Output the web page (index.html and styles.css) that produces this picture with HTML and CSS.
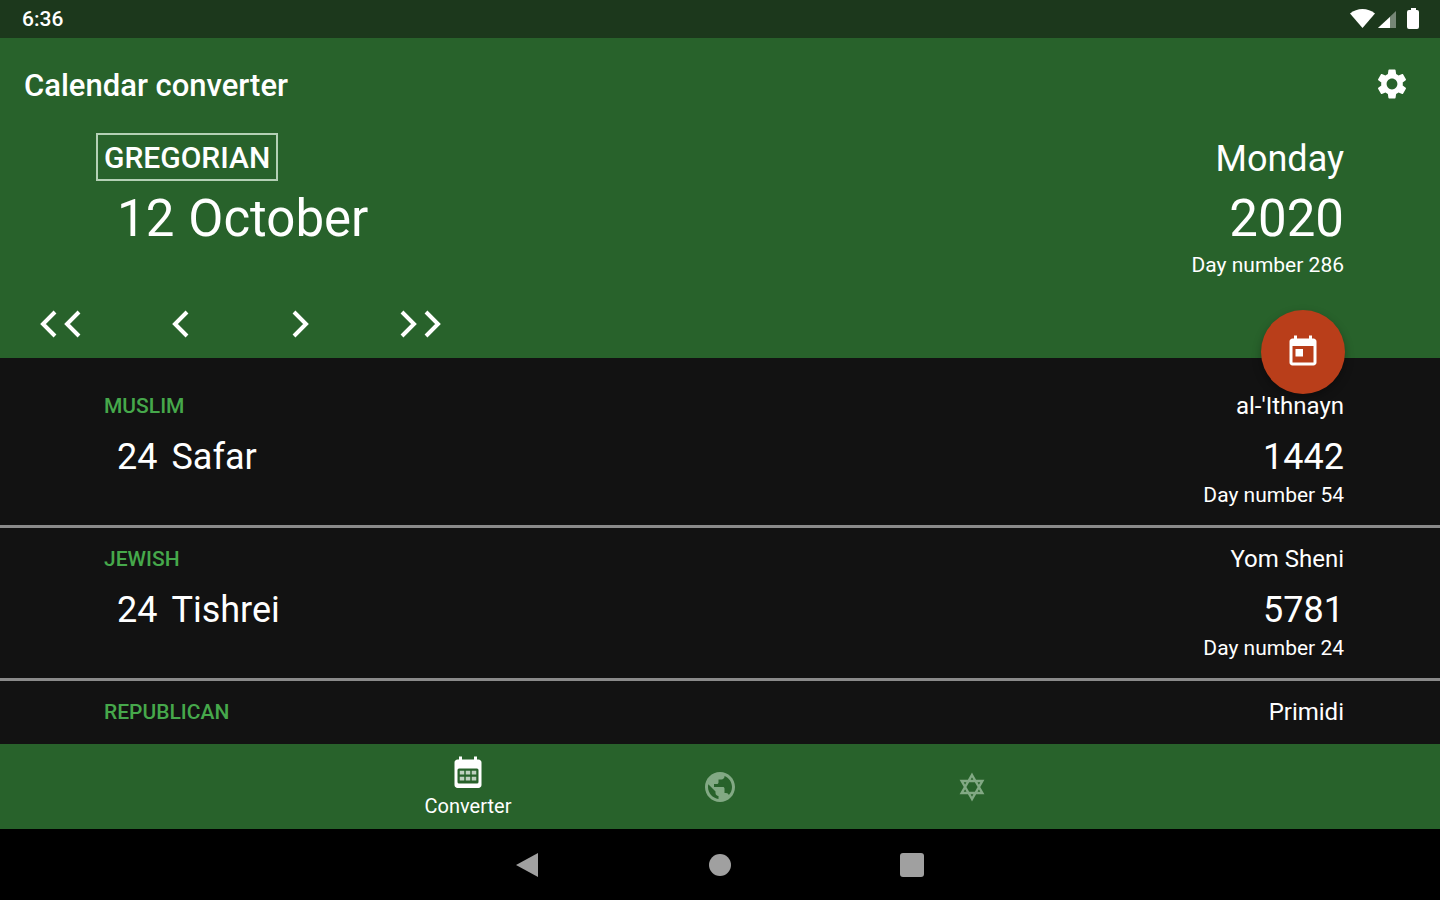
FILE: index.html
```
<!DOCTYPE html>
<html lang="en">

<head>
    <meta charset="UTF-8">
    <title>Calendar converter</title>
    <meta name="viewport" content="width=device-width, initial-scale=1.0">
    <link rel="stylesheet" href="styles.css">
</head>

<body>
    <div class="status-bar">
        <span class="clock">6:36</span>
        <svg class="status-icons" viewBox="0 0 70 22" fill="#fff">
            <path d="M0 5.500C7-.5 18-.5 25 5.500L12.500 20z" />
            <path d="M46 3v17H28z" opacity=".4" />
            <path d="M40 9v11H28z" />
            <path d="M59 2h2V0h5v2h1q2 0 2 2v15q0 2-2 2h-8q-2 0-2-2V4q0-2 2-2z" />
        </svg>
    </div>

    <header class="header">
        <div class="app-bar">
            <h1>Calendar converter</h1>
            <button class="settings" aria-label="Settings">
                <svg class="icon" viewBox="0 0 24 24"><path d="M19.140 12.940c.04-.3.06-.61.06-.94 0-.32-.02-.64-.07-.94l2.030-1.580c.18-.14.23-.41.12-.61l-1.920-3.320c-.12-.22-.37-.29-.59-.22l-2.390.96c-.5-.38-1.030-.7-1.620-.94l-.36-2.540c-.04-.24-.24-.41-.48-.41h-3.840c-.24 0-.43.17-.47.41l-.36 2.540c-.59.24-1.130.57-1.620.94l-2.390-.96c-.22-.08-.47 0-.59.22L2.740 8.870c-.12.21-.08.47.12.61l2.030 1.580c-.05.3-.09.63-.09.94s.02.64.07.94l-2.030 1.580c-.18.14-.23.41-.12.61l1.920 3.320c.12.22.37.29.59.22l2.390-.96c.5.38 1.030.7 1.620.94l.36 2.540c.05.24.24.41.48.41h3.840c.24 0 .44-.17.47-.41l.36-2.540c.59-.24 1.130-.56 1.620-.94l2.390.96c.22.08.47 0 .59-.22l1.920-3.320c.12-.22.07-.47-.12-.61l-2.010-1.580zM12 15.600c-1.980 0-3.600-1.620-3.600-3.600s1.620-3.600 3.600-3.600 3.600 1.620 3.600 3.600-1.620 3.600-3.600 3.600z" /></svg>
            </button>
        </div>

        <div class="current">
            <div class="row">
                <button class="calendar-type">GREGORIAN</button>
                <span class="weekday">Monday</span>
            </div>
            <div class="row main">
                <span class="date"><span>12</span><span>October</span></span>
                <span>2020</span>
            </div>
            <div class="row day-number">Day number 286</div>
        </div>

        <div class="steps">
            <button aria-label="Back a lot"><svg width="42" height="28" viewBox="0 0 42 28"><path d="M16 2L4 14l12 12M40 2L28 14l12 12" /></svg></button>
            <button aria-label="Previous day"><svg width="18" height="28" viewBox="0 0 18 28"><path d="M16 2L4 14l12 12" /></svg></button>
            <button aria-label="Next day"><svg width="18" height="28" viewBox="0 0 18 28"><path d="M3 2l12 12L3 26" /></svg></button>
            <button aria-label="Forward a lot"><svg width="42" height="28" viewBox="0 0 42 28"><path d="M3 2l12 12L3 26M27 2l12 12-12 12" /></svg></button>
        </div>

        <button class="today" aria-label="Today">
            <svg class="icon" viewBox="0 0 24 24"><path d="M19 3h-1V1h-2v2H8V1H6v2H5c-1.110 0-1.990.9-1.990 2L3 19c0 1.100.89 2 2 2h14c1.100 0 2-.9 2-2V5c0-1.100-.9-2-2-2zm0 16H5V8h14v11zM7 10h5v5H7z" /></svg>
        </button>
    </header>

    <main class="list">
        <section class="item">
            <div class="row name"><h2>MUSLIM</h2><span>al-'Ithnayn</span></div>
            <div class="row main">
                <span class="date"><span>24</span><span>Safar</span></span>
                <span>1442</span>
            </div>
            <div class="row day-number">Day number 54</div>
        </section>
        <section class="item">
            <div class="row name"><h2>JEWISH</h2><span>Yom Sheni</span></div>
            <div class="row main">
                <span class="date"><span>24</span><span>Tishrei</span></span>
                <span>5781</span>
            </div>
            <div class="row day-number">Day number 24</div>
        </section>
        <section class="item">
            <div class="row name"><h2>REPUBLICAN</h2><span>Primidi</span></div>
        </section>
    </main>

    <nav class="tabs">
        <a class="active" href="#converter">
            <svg class="icon" viewBox="0 0 24 24">
                <path fill-rule="evenodd" d="M19 3h-1V1h-2v2H8V1H6v2H5c-1.100 0-2 .9-2 2v15c0 1.100.9 2 2 2h14c1.100 0 2-.9 2-2V5c0-1.100-.9-2-2-2zM6 9h12q1 0 1 1v8q0 1-1 1H6q-1 0-1-1v-8q0-1 1-1z" />
                <path opacity=".7" d="M6.500 10.500h3v2.500h-3zM10.500 10.500h3v2.500h-3zM14.500 10.500h3v2.500h-3zM6.500 14.500h3V17h-3zM10.500 14.500h3V17h-3zM14.500 14.500h3V17h-3z" />
            </svg>
            <span>Converter</span>
        </a>
        <a href="#world" aria-label="World">
            <svg class="icon" viewBox="0 0 24 24"><path d="M12 2C6.480 2 2 6.480 2 12s4.480 10 10 10 10-4.480 10-10S17.520 2 12 2zm-1 17.930c-3.950-.49-7-3.850-7-7.930 0-.62.08-1.210.21-1.790L9 15v1c0 1.100.9 2 2 2v1.930zm6.900-2.540c-.26-.81-1-1.390-1.900-1.390h-1v-3c0-.55-.45-1-1-1H8v-2h2c.55 0 1-.45 1-1V7h2c1.100 0 2-.9 2-2v-.41c2.930 1.190 5 4.060 5 7.410 0 2.080-.8 3.970-2.100 5.390z" /></svg>
        </a>
        <a href="#jewish" aria-label="Jewish">
            <svg class="icon star" viewBox="0 0 24 24"><path d="M12 4l6.900 12H5.100zM12 20L5.100 8h13.800z" /></svg>
        </a>
    </nav>

    <div class="system-bar">
        <button aria-label="Back"><svg width="26" height="26" viewBox="0 0 26 26"><path d="M23 1v24L1 13z" /></svg></button>
        <button aria-label="Home"><svg width="26" height="26" viewBox="0 0 26 26"><circle cx="13" cy="13" r="11" /></svg></button>
        <button aria-label="Recent apps"><svg width="26" height="26" viewBox="0 0 26 26"><rect x="1" y="1" width="24" height="24" rx="3" /></svg></button>
    </div>
</body>

</html>
```
FILE: styles.css
```
* {
    box-sizing: border-box;
}

body {
    margin: 0;
    height: 100vh;
    display: flex;
    flex-direction: column;
    background: #121212;
    color: #fff;
    font-family: Roboto, sans-serif;
}

h1,
h2 {
    margin: 0;
    font-weight: 500;
}

button {
    padding: 0;
    border: none;
    background: none;
    color: inherit;
    font-family: inherit;
    cursor: pointer;
}

svg {
    display: block;
}

.icon {
    width: 36px;
    height: 36px;
    fill: currentColor;
}

.status-bar {
    height: 38px;
    flex-shrink: 0;
    padding: 0 20px 0 22px;
    display: flex;
    align-items: center;
    justify-content: space-between;
    background: #1c381c;
}

.clock {
    font-size: 21px;
    font-weight: 500;
}

.status-icons {
    width: 70px;
    height: 22px;
}

.header {
    position: relative;
    flex-shrink: 0;
    background: #28622b;
}

.app-bar {
    height: 95px;
    padding: 0 30px 0 24px;
    display: flex;
    align-items: center;
    justify-content: space-between;
}

.settings {
    padding-bottom: 4px;
}

h1 {
    font-size: 31px;
}

.current {
    padding: 0 96px;
}

.row {
    display: flex;
    align-items: center;
    justify-content: space-between;
}

.calendar-type {
    height: 48px;
    padding: 0 6px;
    border: 2px solid #b4d0b5;
    font-size: 30px;
    font-weight: 500;
}

.weekday {
    padding-top: 4px;
    font-size: 36px;
}

.main {
    height: 48px;
    margin-top: 8px;
    font-size: 36px;
}

.current .main {
    height: 66px;
    margin-top: 4px;
    font-size: 51px;
}

.date {
    display: flex;
    gap: 14px;
    padding-left: 21px;
}

.day-number {
    height: 28px;
    justify-content: flex-end;
    font-size: 21px;
}

.steps {
    height: 68px;
    margin-top: 11px;
    display: flex;
}

.steps button {
    width: 120px;
    display: flex;
    align-items: center;
    justify-content: center;
}

.steps path {
    fill: none;
    stroke: #fff;
    stroke-width: 4;
}

.today {
    position: absolute;
    right: 95px;
    bottom: -36px;
    width: 84px;
    height: 84px;
    border-radius: 50%;
    background: #b93e1a;
    display: flex;
    align-items: center;
    justify-content: center;
    box-shadow: 0 4px 10px rgba(0, 0, 0, 0.3);
}

.list {
    flex: 1;
    min-height: 0;
    padding-top: 17px;
    overflow: hidden;
}

.item {
    padding: 12px 96px 16px;
    border-bottom: 3px solid #8a8a8a;
}

.name {
    height: 38px;
    font-size: 24px;
}

h2 {
    padding-left: 8px;
    font-size: 21px;
    color: #46a84b;
}

.tabs {
    height: 85px;
    flex-shrink: 0;
    display: flex;
    justify-content: center;
    background: #28622b;
}

.tabs a {
    width: 252px;
    display: flex;
    flex-direction: column;
    align-items: center;
    justify-content: center;
    gap: 3px;
    color: #82a984;
    font-size: 20px;
    text-decoration: none;
}

.tabs .active {
    color: #fff;
}

.star {
    fill: none;
    stroke: currentColor;
    stroke-width: 1.6;
}

.system-bar {
    height: 71px;
    flex-shrink: 0;
    display: flex;
    justify-content: center;
    background: #000;
}

.system-bar button {
    width: 192px;
    display: flex;
    align-items: center;
    justify-content: center;
}

.system-bar svg {
    fill: #a0a0a0;
}
```
